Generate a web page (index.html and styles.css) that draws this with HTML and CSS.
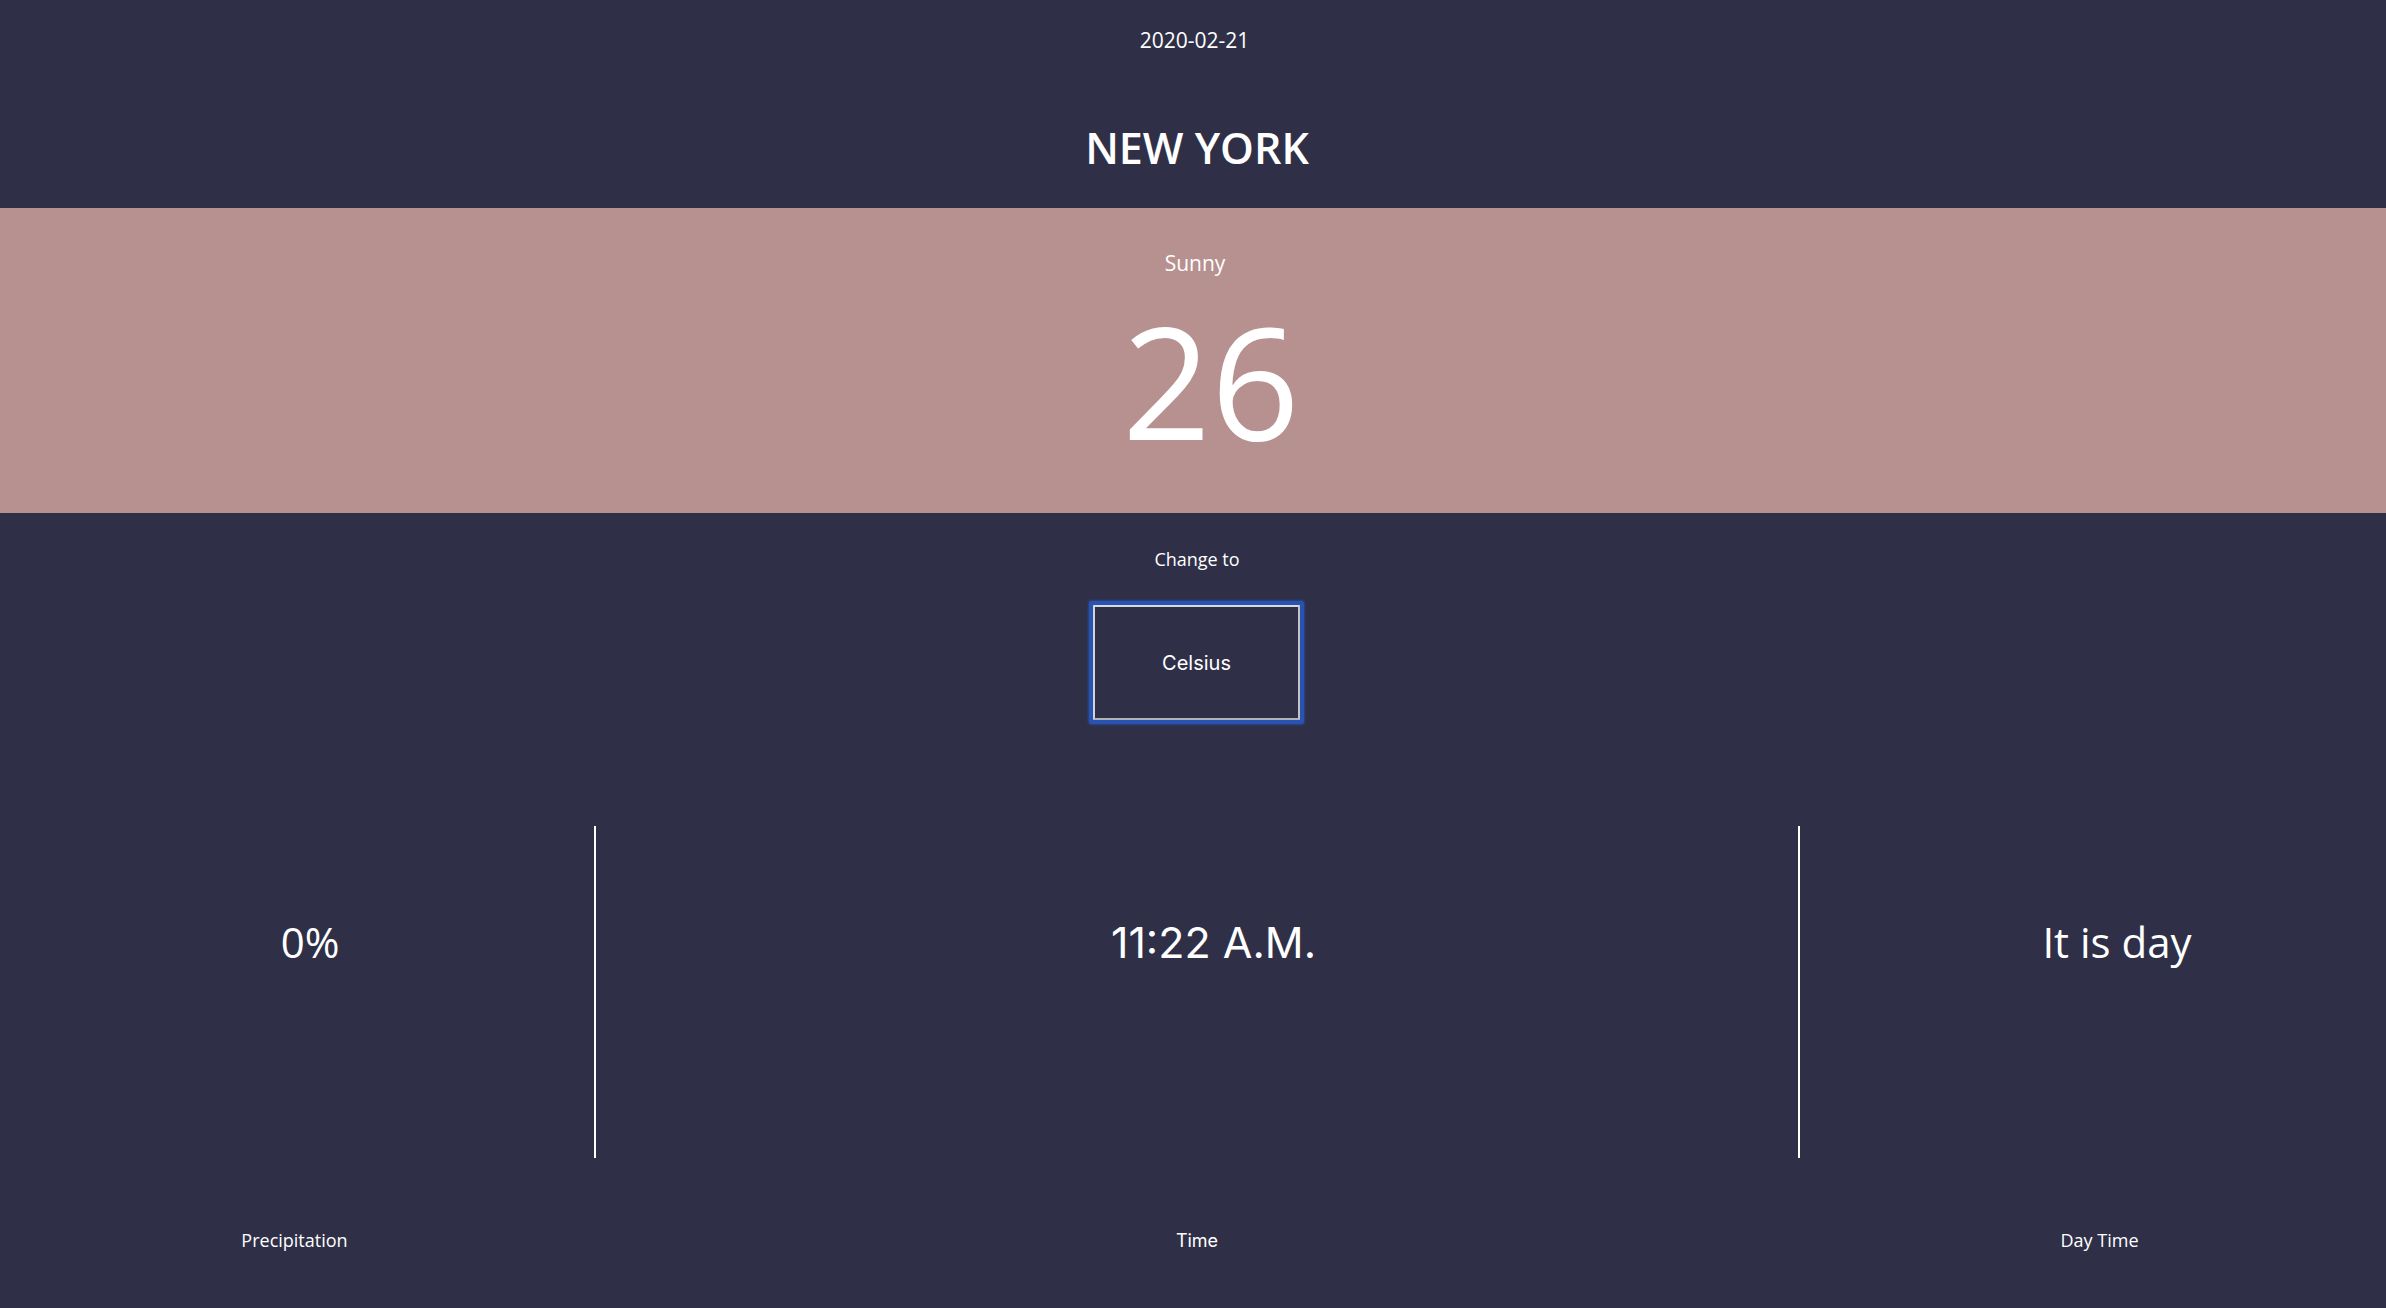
FILE: index.html
```html
<!DOCTYPE html>
<html lang="en">
<head>
<meta charset="utf-8">
<title>Weather - New York</title>
<link rel="stylesheet" href="styles.css">
</head>
<body>
<header class="top">
  <div class="date">2020-02-21</div>
  <h1 class="city">NEW YORK</h1>
</header>
<section class="band">
  <div class="cond">Sunny</div>
  <div class="temp">26</div>
</section>
<section class="switch">
  <div class="change">Change to</div>
  <button class="unit-btn">Celsius</button>
</section>
<section class="stats">
  <div class="cell cell-left"><div class="val val-left">0%</div></div>
  <div class="cell cell-mid"><div class="val val-mid">11:22 A.M.</div></div>
  <div class="cell cell-right"><div class="val val-right">It is day</div></div>
  <div class="lab lab-left">Precipitation</div>
  <div class="lab lab-mid">Time</div>
  <div class="lab lab-right">Day Time</div>
</section>
</body>
</html>
```
FILE: styles.css
```css
html, body {
  margin: 0;
  padding: 0;
}
body {
  background: #2f3048;
  color: #ffffff;
  font-family: "Open Sans", "Noto Sans", sans-serif;
  min-height: 1308px;
  overflow: hidden;
}
.top {
  text-align: center;
  padding-top: 26px;
  height: 208px;
  box-sizing: border-box;
}
.date {
  font-size: 21px;
  line-height: 29px;
  padding-left: 3px;
}
.city {
  margin: 63px 0 0 0;
  font-size: 43px;
  font-weight: 600;
  line-height: 59px;
  padding-left: 8px;
}
.band {
  background: #b7918f;
  text-align: center;
  height: 305px;
  box-sizing: border-box;
  padding-top: 41px;
}
.cond {
  font-size: 21px;
  line-height: 29px;
  padding-left: 4px;
}
.temp {
  font-size: 155px;
  line-height: 155px;
  margin-top: 24px;
  padding-left: 36px;
}
.switch {
  text-align: center;
  padding-top: 34px;
}
.change {
  font-size: 18px;
  line-height: 25px;
  padding-left: 8px;
}
.unit-btn {
  margin-top: 33px;
  margin-left: 7px;
  width: 207px;
  height: 115px;
  background: #2f3048;
  color: #ffffff;
  font-family: Inter, "Liberation Sans", sans-serif;
  font-size: 20px;
  border: 2px solid;
  border-color: #dadade #c4c4c8 #b2b2b6 #d4d4d8;
  box-shadow: 0 0 0 4px #2853b2, 0 0 2px 5px rgba(40, 83, 178, 0.6);
  border-radius: 1px;
  padding: 0;
  display: inline-block;
}
.stats {
  margin-top: 106px;
  display: grid;
  grid-template-columns: 594fr 1206fr 586fr;
}
.cell {
  height: 332px;
  box-sizing: border-box;
}
.cell-mid {
  border-left: 2px solid #ffffff;
  border-right: 2px solid #ffffff;
}
.val {
  font-size: 42px;
  text-align: center;
}
.val-left {
  padding-top: 87px;
  line-height: 57px;
  padding-left: 26px;
}
.val-mid {
  font-family: Inter, "Liberation Sans", sans-serif;
  font-size: 43px;
  padding-top: 90px;
  line-height: 52px;
  padding-left: 33px;
}
.val-right {
  padding-top: 87px;
  line-height: 57px;
  padding-left: 48px;
}
.lab {
  font-size: 18px;
  text-align: center;
  margin-top: 70px;
  line-height: 25px;
}
.lab-left {
  padding-right: 5px;
}
.lab-mid {
  font-family: Inter, "Liberation Sans", sans-serif;
  margin-top: 72px;
  line-height: 22px;
}
.lab-right {
  padding-left: 13px;
}
```
